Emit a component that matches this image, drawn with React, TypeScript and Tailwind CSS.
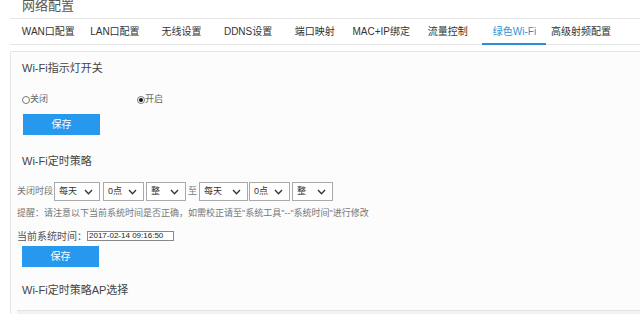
import React from "react";

const TABS = [
  "WAN口配置",
  "LAN口配置",
  "无线设置",
  "DDNS设置",
  "端口映射",
  "MAC+IP绑定",
  "流量控制",
  "绿色Wi-Fi",
  "高级射频配置",
];

function Chevron() {
  return (
    <svg width="9" height="6" viewBox="0 0 9 6" className="shrink-0">
      <polyline points="1,1 4.5,4.8 8,1" fill="none" stroke="#333" strokeWidth="1.3" />
    </svg>
  );
}

function Select({ value, w }: { value: string; w: string }) {
  return (
    <div
      className={`flex h-[19px] items-center justify-between border border-[#a9a9a9] bg-white pl-[4px] pr-[6px] text-[9px] text-[#333] ${w}`}
    >
      <span>{value}</span>
      <Chevron />
    </div>
  );
}

function Radio({ checked, label }: { checked?: boolean; label: string }) {
  return (
    <div className="flex items-center text-[9px] text-[#666]">
      <span className="flex h-[8px] w-[8px] items-center justify-center rounded-full border border-[#777] bg-white">
        {checked && <span className="h-[4px] w-[4px] rounded-full bg-[#111]" />}
      </span>
      <span>{label}</span>
    </div>
  );
}

function SaveButton({ className = "" }: { className?: string }) {
  return (
    <button
      type="button"
      className={`flex h-[21px] w-[77px] items-center justify-center bg-[#2698ee] text-[10px] text-white ${className}`}
    >
      保存
    </button>
  );
}

export default function App() {
  return (
    <div className="h-[314px] w-[640px] overflow-hidden bg-white pl-[10px] font-['Liberation_Sans','Noto_Sans_CJK_SC',sans-serif]">
      {/* page title */}
      <div className="h-[20px] border-b border-[#e6e6e6] pl-[12px]">
        <div className="-mt-[1px] text-[13px] leading-[13px] text-[#555]">网络配置</div>
      </div>

      {/* tabs */}
      <div className="flex h-[26px] border-b border-[#e6e6e6] pl-[5px]">
        {TABS.map((t) => {
          const active = t === "绿色Wi-Fi";
          return (
            <div
              key={t}
              className={`relative flex w-[66.6px] shrink-0 items-center justify-center whitespace-nowrap text-[10px] ${
                active ? "text-[#2a93d8]" : "text-[#333]"
              }`}
            >
              {t}
              {active && (
                <span className="absolute -bottom-[1px] left-[1px] h-[2px] w-[64px] bg-[#2a8fd8]" />
              )}
            </div>
          );
        })}
      </div>

      {/* panel */}
      <div className="mt-[6px] h-[300px] border-l border-t border-[#e6e6e6] bg-[#fcfcfc]">
        <div className="pl-[11px] pt-[8px] text-[11px] leading-[16px] text-[#444]">Wi-Fi指示灯开关</div>

        <div className="mt-[18px] flex h-[12px] items-center pl-[11px]">
          <div className="w-[115px]">
            <Radio label="关闭" />
          </div>
          <Radio checked label="开启" />
        </div>

        <SaveButton className="ml-[12px] mt-[8px]" />

        <div className="mt-[18px] pl-[11px] text-[11px] leading-[16px] text-[#444]">Wi-Fi定时策略</div>

        <div className="mt-[13px] flex items-center pl-[6px]">
          <span className="mr-[1px] text-[9px] text-[#777]">关闭时段</span>
          <Select value="每天" w="w-[46px]" />
          <Select value="0点" w="ml-[3px] w-[41px]" />
          <Select value="整" w="ml-[2px] w-[40px]" />
          <span className="mx-[2px] text-[9px] text-[#777]">至</span>
          <Select value="每天" w="w-[49px]" />
          <Select value="0点" w="ml-[1px] w-[41px]" />
          <Select value="整" w="ml-[2px] w-[41px]" />
        </div>

        <div className="mt-[6px] pl-[6px] text-[9px] leading-[12px] text-[#777]">
          提醒：请注意以下当前系统时间是否正确，如需校正请至"系统工具"--"系统时间"进行修改
        </div>

        <div className="mt-[11px] flex h-[12px] items-center pl-[6px]">
          <span className="text-[10px] text-[#555]">当前系统时间：</span>
          <div className="flex h-[10px] w-[87px] items-center border border-[#888] bg-white pl-[1px] text-[8px] leading-[8px] text-[#222]">
            2017-02-14 09:16:50
          </div>
        </div>

        <SaveButton className="ml-[11px] mt-[4px]" />

        <div className="mt-[15px] pl-[11px] text-[11px] leading-[16px] text-[#444]">Wi-Fi定时策略AP选择</div>

        <div className="ml-[6px] mt-[12px] h-[8px] border-t border-[#e2e2e2] bg-[#f2f2f2]" />
      </div>
    </div>
  );
}
